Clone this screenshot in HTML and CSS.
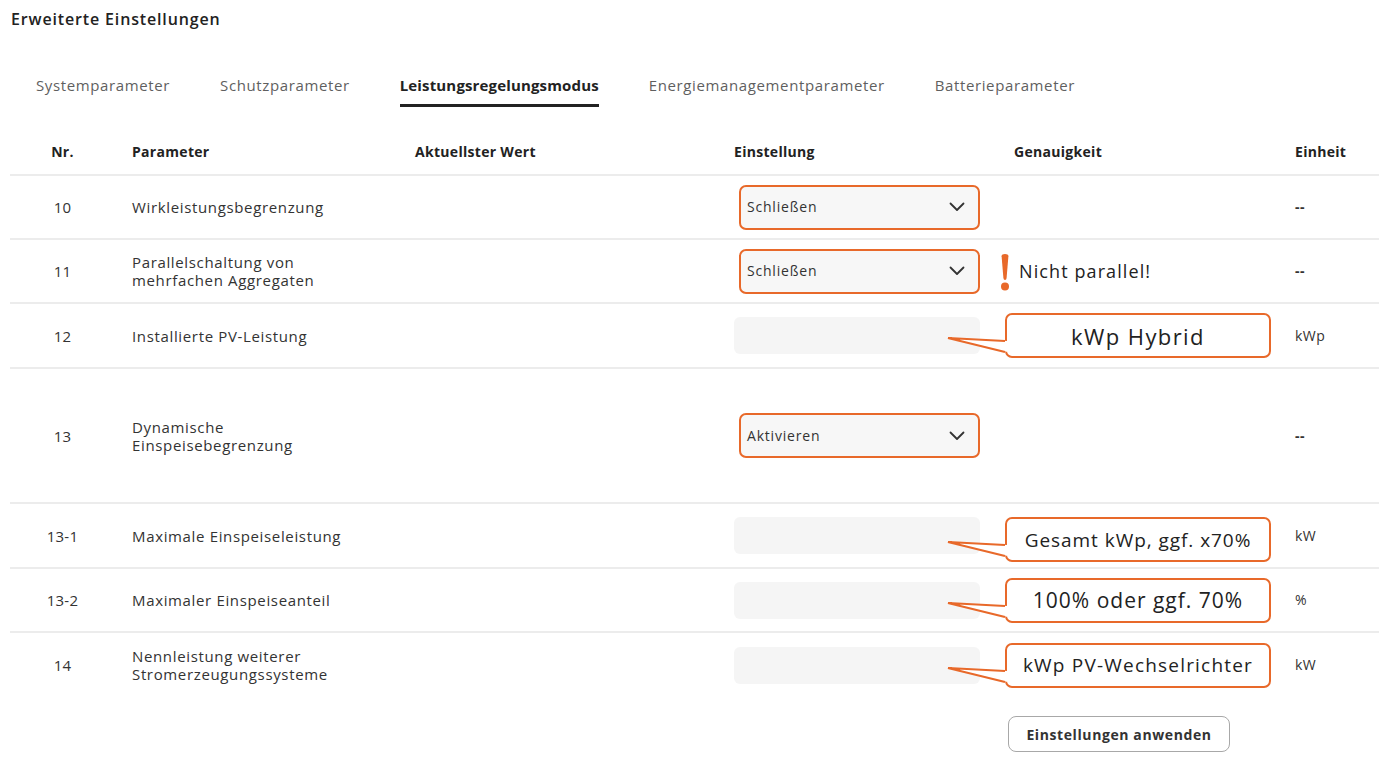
FILE: index.html
```html
<!DOCTYPE html>
<html lang="de">
<head>
<meta charset="utf-8">
<title>Erweiterte Einstellungen</title>
<link rel="stylesheet" href="styles.css">
</head>
<body>
<div class="page">
  <h1 class="title">Erweiterte Einstellungen</h1>

  <nav class="tabs">
    <span class="tab">Systemparameter</span>
    <span class="tab">Schutzparameter</span>
    <span class="tab active">Leistungsregelungsmodus</span>
    <span class="tab">Energiemanagementparameter</span>
    <span class="tab">Batterieparameter</span>
  </nav>

  <div class="table">
    <div class="row head">
      <div class="cell c-nr">Nr.</div>
      <div class="cell c-param">Parameter</div>
      <div class="cell c-cur">Aktuellster Wert</div>
      <div class="cell c-set">Einstellung</div>
      <div class="cell c-acc">Genauigkeit</div>
      <div class="cell c-unit">Einheit</div>
    </div>

    <div class="row">
      <div class="cell c-nr">10</div>
      <div class="cell c-param">Wirkleistungsbegrenzung</div>
      <div class="cell c-cur"></div>
      <div class="cell c-set">
        <div class="select"><span>Schließen</span><svg class="chev" width="16" height="10" viewBox="0 0 16 10"><polyline points="1.5,1.5 8,8 14.5,1.5" /></svg></div>
      </div>
      <div class="cell c-acc"></div>
      <div class="cell c-unit dash">--</div>
    </div>

    <div class="row">
      <div class="cell c-nr">11</div>
      <div class="cell c-param">Parallelschaltung von<br>mehrfachen Aggregaten</div>
      <div class="cell c-cur"></div>
      <div class="cell c-set">
        <div class="select"><span>Schließen</span><svg class="chev" width="16" height="10" viewBox="0 0 16 10"><polyline points="1.5,1.5 8,8 14.5,1.5" /></svg></div>
      </div>
      <div class="cell c-acc">
        <div class="warn">
          <svg class="bang" width="10" height="37" viewBox="0 0 10 37"><path d="M1.6 2.2 Q1.5 0 5 0 Q8.5 0 8.4 2.2 L6.6 24 Q6.4 26 5 26 Q3.6 26 3.4 24 Z"/><circle cx="5" cy="32.5" r="4"/></svg>
          <span class="warn-text">Nicht parallel!</span>
        </div>
      </div>
      <div class="cell c-unit dash">--</div>
    </div>

    <div class="row r65">
      <div class="cell c-nr">12</div>
      <div class="cell c-param">Installierte PV-Leistung</div>
      <div class="cell c-cur"></div>
      <div class="cell c-set"><div class="input"></div></div>
      <div class="cell c-acc">
        <div class="callout xl">kWp Hybrid<svg class="pointer" width="62" height="20" viewBox="0 0 62 20"><polygon class="fill" points="2,2 61.5,5 61.5,16"/><polyline class="line" points="59,5 2,2 59,16"/></svg></div>
      </div>
      <div class="cell c-unit">kWp</div>
    </div>

    <div class="row tall">
      <div class="cell c-nr">13</div>
      <div class="cell c-param">Dynamische<br>Einspeisebegrenzung</div>
      <div class="cell c-cur"></div>
      <div class="cell c-set">
        <div class="select"><span>Aktivieren</span><svg class="chev" width="16" height="10" viewBox="0 0 16 10"><polyline points="1.5,1.5 8,8 14.5,1.5" /></svg></div>
      </div>
      <div class="cell c-acc"></div>
      <div class="cell c-unit dash">--</div>
    </div>

    <div class="row r65">
      <div class="cell c-nr">13-1</div>
      <div class="cell c-param">Maximale Einspeiseleistung</div>
      <div class="cell c-cur"></div>
      <div class="cell c-set"><div class="input"></div></div>
      <div class="cell c-acc">
        <div class="callout low">Gesamt kWp, ggf. x70%<svg class="pointer" width="62" height="20" viewBox="0 0 62 20"><polygon class="fill" points="2,2 61.5,5 61.5,16"/><polyline class="line" points="59,5 2,2 59,16"/></svg></div>
      </div>
      <div class="cell c-unit">kW</div>
    </div>

    <div class="row">
      <div class="cell c-nr">13-2</div>
      <div class="cell c-param">Maximaler Einspeiseanteil</div>
      <div class="cell c-cur"></div>
      <div class="cell c-set"><div class="input"></div></div>
      <div class="cell c-acc">
        <div class="callout big">100% oder ggf. 70%<svg class="pointer" width="62" height="20" viewBox="0 0 62 20"><polygon class="fill" points="2,2 61.5,5 61.5,16"/><polyline class="line" points="59,5 2,2 59,16"/></svg></div>
      </div>
      <div class="cell c-unit">%</div>
    </div>

    <div class="row last">
      <div class="cell c-nr">14</div>
      <div class="cell c-param">Nennleistung weiterer<br>Stromerzeugungssysteme</div>
      <div class="cell c-cur"></div>
      <div class="cell c-set"><div class="input"></div></div>
      <div class="cell c-acc">
        <div class="callout">kWp PV-Wechselrichter<svg class="pointer" width="62" height="20" viewBox="0 0 62 20"><polygon class="fill" points="2,2 61.5,5 61.5,16"/><polyline class="line" points="59,5 2,2 59,16"/></svg></div>
      </div>
      <div class="cell c-unit">kW</div>
    </div>

    <div class="actions">
      <button class="apply" type="button">Einstellungen anwenden</button>
    </div>
  </div>
</div>
</body>
</html>
```

FILE: styles.css
```css
* { box-sizing: border-box; }

html, body {
  margin: 0;
  padding: 0;
  background: #ffffff;
}

body {
  font-family: "Open Sans", "Noto Sans", "DejaVu Sans", sans-serif;
  color: #333333;
  font-size: 15px;
}

.page {
  padding: 8px 0 0 10px;
  width: 1379px;
}

.title {
  margin: 0;
  padding-left: 1px;
  font-size: 16px;
  line-height: 22px;
  font-weight: 600;
  color: #222222;
  letter-spacing: 0.85px;
}

.tabs {
  display: flex;
  align-items: flex-start;
  gap: 50px;
  margin-top: 44px;
  padding-left: 26px;
  height: 33px;
}

.tab {
  font-size: 15px;
  line-height: 22px;
  color: #5f5f5f;
  letter-spacing: 0.62px;
  height: 33px;
}

.tab.active {
  font-weight: 700;
  color: #222222;
  border-bottom: 3px solid #222222;
  letter-spacing: 0.15px;
}

.table {
  display: flex;
  flex-direction: column;
  margin-top: 23px;
}

.row {
  display: grid;
  grid-template-columns: 105px 300px 319px 280px 281px 1fr;
  height: 64px;
  border-bottom: 2px solid #ececec;
}

.row.head {
  height: 46px;
  padding-bottom: 1px;
  font-size: 14px;
  font-weight: 700;
  color: #222222;
}

.row.r65 { height: 65px; }
.row.tall { height: 135px; }
.row.last { border-bottom: none; }

.cell {
  display: flex;
  align-items: center;
  line-height: 18px;
  letter-spacing: 0.65px;
  min-width: 0;
}

.head .cell { letter-spacing: 0.3px; }

.c-nr { justify-content: center; letter-spacing: 0.2px; }
.c-param { padding-left: 17px; }

.select {
  margin-left: 5px;
  width: 241px;
  height: 45px;
  border: 2px solid #e8692a;
  border-radius: 7px;
  background: #f7f7f7;
  display: flex;
  align-items: center;
  justify-content: space-between;
  padding: 0 13px 0 6px;
  color: #333333;
  font-size: 14px;
  letter-spacing: 0.8px;
}

.chev polyline {
  fill: none;
  stroke: #333333;
  stroke-width: 1.8;
  stroke-linecap: round;
  stroke-linejoin: round;
}

.input {
  width: 246px;
  height: 37px;
  border-radius: 6px;
  background: #f5f5f5;
}

.warn {
  display: flex;
  align-items: center;
  margin-left: -14px;
  gap: 9px;
}

.bang { fill: #e8692a; margin-top: 2px; }

.warn-text {
  font-size: 18px;
  color: #222222;
  letter-spacing: 1.1px;
}

.callout {
  position: relative;
  margin-left: -9px;
  width: 266px;
  height: 45px;
  border: 2px solid #e8692a;
  border-radius: 7px;
  background: #ffffff;
  display: flex;
  align-items: center;
  justify-content: center;
  font-size: 19px;
  color: #222222;
  letter-spacing: 1.2px;
}

.callout.low { margin-top: 8px; letter-spacing: 0.95px; }
.callout.big { font-size: 21px; letter-spacing: 1px; }
.callout.xl { font-size: 22px; letter-spacing: 1.4px; }

.pointer {
  position: absolute;
  left: -61px;
  top: 21px;
  overflow: visible;
}

.pointer .fill { fill: #ffffff; stroke: none; }
.pointer .line {
  fill: none;
  stroke: #e8692a;
  stroke-width: 2.2;
  stroke-linejoin: miter;
}

.c-unit { font-size: 14px; letter-spacing: 0.5px; }
.dash { font-weight: 700; }

.actions {
  display: grid;
  grid-template-columns: 105px 300px 319px 280px 281px 1fr;
  padding-top: 19px;
}

.apply {
  grid-column: 5;
  margin-left: -6px;
  width: 222px;
  height: 36px;
  border: 1.5px solid #a8a8a8;
  border-radius: 8px;
  background: #ffffff;
  font-family: inherit;
  font-size: 14px;
  font-weight: 700;
  color: #333333;
  letter-spacing: 0.6px;
  cursor: pointer;
}
```
